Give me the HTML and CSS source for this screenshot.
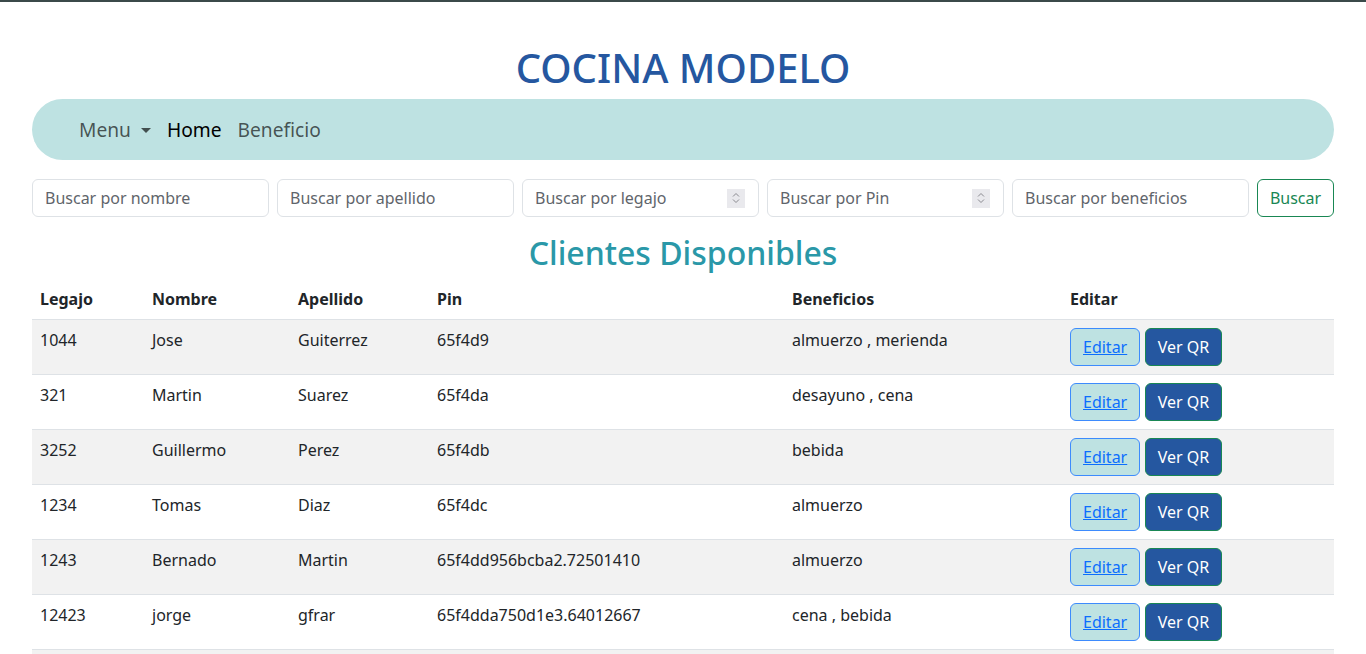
FILE: index.html
```html
<!DOCTYPE html>
<html lang="es">
<head>
<meta charset="utf-8">
<title>Cocina Modelo</title>
<link rel="stylesheet" href="styles.css">
</head>
<body>
<div class="page">
  <h1 class="title">COCINA MODELO</h1>
  <nav class="navbar">
    <a class="nav-link dropdown">Menu <span class="caret"></span></a>
    <a class="nav-link active">Home</a>
    <a class="nav-link">Beneficio</a>
  </nav>
  <form class="search">
    <div class="field"><input type="text" placeholder="Buscar por nombre"></div>
    <div class="field"><input type="text" placeholder="Buscar por apellido"></div>
    <div class="field num"><input type="text" placeholder="Buscar por legajo"><span class="spin"><svg width="18" height="18" viewBox="0 0 18 18"><path d="M6 7.5 9 4.5 12 7.5M6 10.5 9 13.5 12 10.5" fill="none" stroke="#8a8a90" stroke-width="1"/></svg></span></div>
    <div class="field num"><input type="text" placeholder="Buscar por Pin"><span class="spin"><svg width="18" height="18" viewBox="0 0 18 18"><path d="M6 7.5 9 4.5 12 7.5M6 10.5 9 13.5 12 10.5" fill="none" stroke="#8a8a90" stroke-width="1"/></svg></span></div>
    <div class="field"><input type="text" placeholder="Buscar por beneficios"></div>
    <button type="button" class="btn-search">Buscar</button>
  </form>
  <h2 class="subtitle">Clientes Disponibles</h2>
  <table class="table">
    <thead>
      <tr><th class="c1">Legajo</th><th class="c2">Nombre</th><th class="c3">Apellido</th><th class="c4">Pin</th><th class="c5">Beneficios</th><th class="c6">Editar</th></tr>
    </thead>
    <tbody>
      <tr><td>1044</td><td>Jose</td><td>Guiterrez</td><td>65f4d9</td><td>almuerzo , merienda</td><td><a class="btn-edit">Editar</a><button class="btn-qr">Ver QR</button></td></tr>
      <tr><td>321</td><td>Martin</td><td>Suarez</td><td>65f4da</td><td>desayuno , cena</td><td><a class="btn-edit">Editar</a><button class="btn-qr">Ver QR</button></td></tr>
      <tr><td>3252</td><td>Guillermo</td><td>Perez</td><td>65f4db</td><td>bebida</td><td><a class="btn-edit">Editar</a><button class="btn-qr">Ver QR</button></td></tr>
      <tr><td>1234</td><td>Tomas</td><td>Diaz</td><td>65f4dc</td><td>almuerzo</td><td><a class="btn-edit">Editar</a><button class="btn-qr">Ver QR</button></td></tr>
      <tr><td>1243</td><td>Bernado</td><td>Martin</td><td>65f4dd956bcba2.72501410</td><td>almuerzo</td><td><a class="btn-edit">Editar</a><button class="btn-qr">Ver QR</button></td></tr>
      <tr><td>12423</td><td>jorge</td><td>gfrar</td><td>65f4dda750d1e3.64012667</td><td>cena , bebida</td><td><a class="btn-edit">Editar</a><button class="btn-qr">Ver QR</button></td></tr>
      <tr><td>5555</td><td>Lucas</td><td>Gomez</td><td>65f4ddb</td><td>almuerzo</td><td><a class="btn-edit">Editar</a><button class="btn-qr">Ver QR</button></td></tr>
    </tbody>
  </table>
</div>
</body>
</html>
```
FILE: styles.css
```css
* { box-sizing: border-box; }
html, body { margin: 0; padding: 0; }
body {
  font-family: "Noto Sans", "Open Sans", sans-serif;
  font-size: 16px;
  line-height: 1.5;
  color: #212529;
  background: #fff;
  border-top: 2px solid #3b4a4a;
}
.page { padding: 0 32px; }
.title {
  margin: 42px 0 7px;
  text-align: center;
  font-size: 40px;
  font-weight: 500;
  line-height: 1.2;
  color: #2557a0;
}
.navbar {
  display: flex;
  align-items: center;
  gap: 16px;
  height: 61px;
  padding: 2px 47px 0;
  background: #bee2e2;
  border-radius: 31px;
}
.nav-link {
  font-size: 19.2px;
  color: rgba(0,0,0,0.65);
  text-decoration: none;
  display: flex;
  align-items: center;
}
.nav-link.active { color: #000; }
.dropdown { gap: 6px; }
.caret {
  display: inline-block;
  width: 0; height: 0;
  border-left: 5px solid transparent;
  border-right: 5px solid transparent;
  border-top: 5px solid rgba(0,0,0,0.65);
  margin-left: 4px;
}
.search {
  display: flex;
  gap: 8px;
  margin-top: 19px;
}
.field {
  flex: 1 1 0;
  min-width: 0;
  display: flex;
  align-items: center;
  height: 38px;
  border: 1px solid #dee2e6;
  border-radius: 6px;
  background: #fff;
  padding: 0 12px;
}
.field input {
  flex: 1 1 0;
  width: 0;
  min-width: 0;
  border: 0;
  outline: 0;
  padding: 0;
  font: inherit;
  color: #212529;
  background: transparent;
}
.field input::placeholder { color: #5f656b; }
.spin {
  display: flex;
  align-items: center;
  justify-content: center;
  width: 18px;
  height: 19px;
  background: #e9e9ed;
  margin-right: 1px;
}
.btn-search {
  flex: 0 0 77px;
  height: 38px;
  font: inherit;
  color: #198754;
  background: #fff;
  border: 1px solid #198754;
  border-radius: 6px;
  padding: 0;
}
.subtitle {
  margin: 17px 0 7px;
  text-align: center;
  font-size: 32px;
  font-weight: 500;
  line-height: 1.2;
  color: #2a98a8;
}
.table {
  width: 100%;
  border-collapse: collapse;
}
.table th, .table td {
  text-align: left;
  vertical-align: top;
  padding: 8px;
  border-bottom: 1px solid #dee2e6;
}
.table th { font-weight: 700; }
.table tbody tr:nth-child(odd) td { background: #f2f2f2; }
.c1 { width: 112px; }
.c2 { width: 146px; }
.c3 { width: 139px; }
.c4 { width: 355px; }
.c5 { width: 278px; }
.btn-edit, .btn-qr {
  display: inline-block;
  height: 38px;
  padding: 0 12px;
  font: inherit;
  line-height: 36px;
  border-radius: 6px;
  vertical-align: top;
}
.btn-edit {
  width: 70px;
  text-align: center;
  color: #0d6efd;
  text-decoration: underline;
  background: #bee2e2;
  border: 1px solid #3d8bfd;
  margin-right: 5px;
}
.btn-qr {
  width: 77px;
  color: #fff;
  background: #2557a0;
  border: 1px solid #198754;
  padding: 0;
}
```
